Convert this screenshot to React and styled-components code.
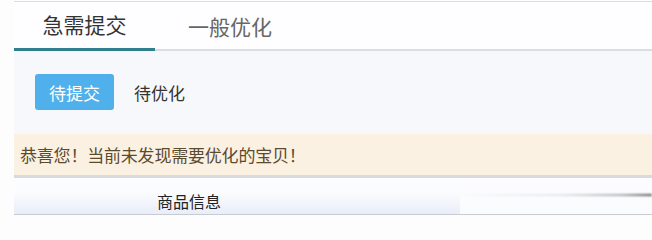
import React from 'react'
import styled, { createGlobalStyle } from 'styled-components'

const GlobalStyle = createGlobalStyle`
  html, body {
    margin: 0;
    padding: 0;
    background: #fdfdfe;
    font-family: "Noto Sans CJK SC", "Noto Sans", sans-serif;
  }
`

const Page = styled.div`
  width: 652px;
  height: 228px;
  overflow: hidden;
  padding: 1px 0 0 14px;
  box-sizing: border-box;
`

const Panel = styled.div`
  border-top: 1px solid #dcdce2;
  background: #f7f8fb;
`

const TabBar = styled.div`
  display: flex;
  background: #fefdff;
  border-bottom: 2px solid #dcdde3;
  height: 47px;
`

const Tab = styled.div`
  width: ${({ w }) => w}px;
  display: flex;
  align-items: center;
  justify-content: center;
  font-size: 21px;
  color: ${({ active }) => (active ? '#333' : '#666')};
  box-sizing: border-box;
  margin-bottom: -2px;
  padding-bottom: 2px;
  border-bottom: ${({ active }) => (active ? '3px solid #2f7f8d' : 'none')};
`

const SubTabs = styled.div`
  display: flex;
  align-items: center;
  gap: 20px;
  padding: 23px 0 0 21px;
  height: 36px;
`

const SubButton = styled.div`
  height: 36px;
  display: flex;
  align-items: center;
  justify-content: center;
  border-radius: 3px;
  font-size: 17px;
  background: ${({ active }) => (active ? '#4fb0ec' : 'transparent')};
  color: ${({ active }) => (active ? '#fff' : '#333')};
  width: ${({ active }) => (active ? '79px' : 'auto')};
`

const Notice = styled.div`
  margin-top: 24px;
  height: 41px;
  display: flex;
  align-items: center;
  padding-left: 6px;
  background: #fbf1e2;
  color: #5b4a2e;
  font-size: 17px;
  letter-spacing: -0.2px;
  border-bottom: 3px solid #d9dadf;
`

const TableHead = styled.div`
  position: relative;
  display: grid;
  grid-template-columns: 446px 1fr;
  height: 36px;
  border-bottom: 1px solid #c9cbd2;
`

const HeadCell = styled.div`
  display: flex;
  align-items: center;
  padding-top: 9px;
  box-sizing: border-box;
  font-size: 16px;
  color: #222;
  background: ${({ tint }) =>
    tint ? 'linear-gradient(#fdfdff, #fbfcfe 40%, #e9edf8)' : 'linear-gradient(#fdfdff, #fafbfd)'};
`

const Label = styled.span`
  margin-left: 143px;
`

const Shade = styled.div`
  position: absolute;
  top: 16px;
  right: 0;
  width: 200px;
  height: 2px;
  background: linear-gradient(to right, rgba(150, 150, 160, 0), rgba(190, 190, 198, 0.35) 55%, rgba(120, 120, 125, 0.6) 85%, rgba(70, 70, 75, 0.9));
  filter: blur(1px);
`

export default function App() {
  return (
    <Page>
      <GlobalStyle />
      <Panel>
        <TabBar>
          <Tab w={141} active>急需提交</Tab>
          <Tab w={150}>一般优化</Tab>
        </TabBar>
        <SubTabs>
          <SubButton active>待提交</SubButton>
          <SubButton>待优化</SubButton>
        </SubTabs>
        <Notice>恭喜您！当前未发现需要优化的宝贝！</Notice>
        <TableHead>
          <HeadCell tint>
            <Label>商品信息</Label>
          </HeadCell>
          <HeadCell />
          <Shade />
        </TableHead>
      </Panel>
    </Page>
  )
}
